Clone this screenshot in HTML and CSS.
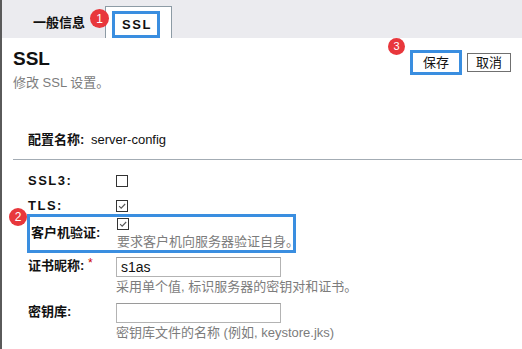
FILE: index.html
```
<!DOCTYPE html>
<html lang="zh-CN">
<head>
  <meta charset="UTF-8" />
  <meta name="viewport" content="width=device-width, initial-scale=1.0" />
  <title>SSL</title>
  <link rel="stylesheet" href="styles.css">
</head>
<body>
<div class="page">
  <div class="tabs">
    <span class="tab">一般信息</span>
    <span class="tab active">
      <span class="mark mark-1">1</span>
      <span class="tab-hl">SSL</span>
    </span>
  </div>

  <div class="head">
    <div>
      <h1>SSL</h1>
      <p class="sub">修改 SSL 设置。</p>
    </div>
    <div class="actions">
      <span class="mark mark-3">3</span>
      <span class="btn-hl"><button class="btn">保存</button></span>
      <button class="btn">取消</button>
    </div>
  </div>

  <div class="name-row"><b>配置名称:</b> server-config</div>
  <hr class="sep">

  <div class="row r-ssl3">
    <label>SSL3:</label>
    <div class="field"><span class="cb"></span></div>
  </div>
  <div class="row r-tls">
    <label>TLS:</label>
    <div class="field"><span class="cb"><svg viewBox="0 0 12 12"><path d="M2.5 6.2 5 8.6 9.8 3.6" /></svg></span></div>
  </div>
  <div class="row r-auth">
    <span class="mark mark-2">2</span>
    <label>客户机验证:</label>
    <div class="field">
      <span class="cb"><svg viewBox="0 0 12 12"><path d="M2.5 6.2 5 8.6 9.8 3.6" /></svg></span>
      <div class="help">要求客户机向服务器验证自身。</div>
    </div>
  </div>
  <div class="row r-nick">
    <label>证书昵称: <span class="req">*</span></label>
    <div class="field">
      <input type="text" value="s1as">
      <div class="help">采用单个值, 标识服务器的密钥对和证书。</div>
    </div>
  </div>
  <div class="row r-store">
    <label>密钥库:</label>
    <div class="field">
      <input type="text" value="">
      <div class="help">密钥库文件的名称 (例如, keystore.jks)</div>
    </div>
  </div>
</div>
</body>
</html>
```
FILE: styles.css
```
:root{--blue:#3a8ee0;--red:#e8373c;--muted:#7c7c7c;--tabbg:#ebebef}
*{box-sizing:border-box;font-family:"Liberation Sans","Noto Sans CJK SC",Arial,sans-serif}
body{margin:0;background:#fff;color:#111;line-height:16px}
.page{min-height:349px;border-left:2px solid #5a5a5a;position:relative}

.tabs{height:38px;background:var(--tabbg);display:flex;align-items:flex-end;padding-left:31px}
.tab{font-size:13px;font-weight:700;padding-bottom:7px}
.tab.active{position:relative;margin-left:20px;width:67px;height:32px;background:#fff;border:1px solid #8d9ba5;border-bottom:none;padding:4px 0 0 6px}
.tab-hl{display:flex;align-items:center;justify-content:center;width:48px;height:27px;border:3px solid var(--blue);font-size:13px;letter-spacing:1.5px;padding-left:2px}

.mark{position:absolute;display:flex;align-items:center;justify-content:center;border-radius:50%;background:var(--red);color:#fff;font-size:12px;font-weight:400;line-height:1}
.mark-1{width:19px;height:19px;left:-16px;top:2px}
.mark-3{width:17px;height:17px;left:0;top:-12px;font-size:11px}
.mark-2{width:18px;height:18px;left:-21px;top:-9px}

.head{display:flex;justify-content:space-between;padding:0 11px}
h1{margin:10px 0 0;font-size:19px;font-weight:700;line-height:22px}
.sub{margin:5px 0 0;font-size:13px;color:var(--muted)}
.actions{position:relative;display:flex;align-items:center;gap:5px;margin-top:12px;padding-left:22px;height:25px}
.btn{font-size:13px;background:#fff;border:1px solid #707070;color:#111;padding:0 8px;height:19px;line-height:16px;border-radius:0}
.btn-hl{border:3px solid var(--blue);display:flex;align-items:center;padding:0 1px;height:25px}
.btn-hl .btn{border-color:#fff}

.name-row{font-size:13px;padding:41px 0 0 26px}
.name-row b{margin-right:3px}
.sep{margin:11px 0 0 11px;border:none;border-top:1px solid #a3acb4;height:0}

.row{display:flex;font-size:13px;padding-left:26px}
.row label{width:88px;font-weight:700;flex:none}
.field{display:flex;flex-direction:column;align-items:flex-start}
.r-ssl3{margin-top:13px}
.r-ssl3 label,.r-tls label{letter-spacing:1.5px}
.r-tls{margin-top:9px}
.r-auth{position:relative;margin:0 0 0 25px;padding:1px 0 0 1px;width:269px;border:3px solid var(--blue);height:39px}
.r-auth label{width:86px;padding-top:7px}
.r-auth .cb{margin-top:0}
.r-auth .help{margin-top:4px;line-height:15px}
.r-nick{margin-top:4px}
.r-store{margin-top:8px}
.r-nick label,.r-store label{padding-top:1px}
.req{color:#c00;font-weight:400;vertical-align:top;font-size:12px;position:relative;top:-3px}

.cb{display:block;width:12px;height:12px;border:1px solid #333;background:#fff;margin-top:2px}
.cb svg{display:block;width:10px;height:10px}
.cb path{fill:none;stroke:#555;stroke-width:1.3}
.help{font-size:13px;color:var(--muted);margin-top:2px;white-space:nowrap}
input{width:165px;height:20px;border:1px solid #b3b3b3;border-top-color:#9a9a9a;font-size:14px;padding:1px 4px;margin:0;color:#111}
```
